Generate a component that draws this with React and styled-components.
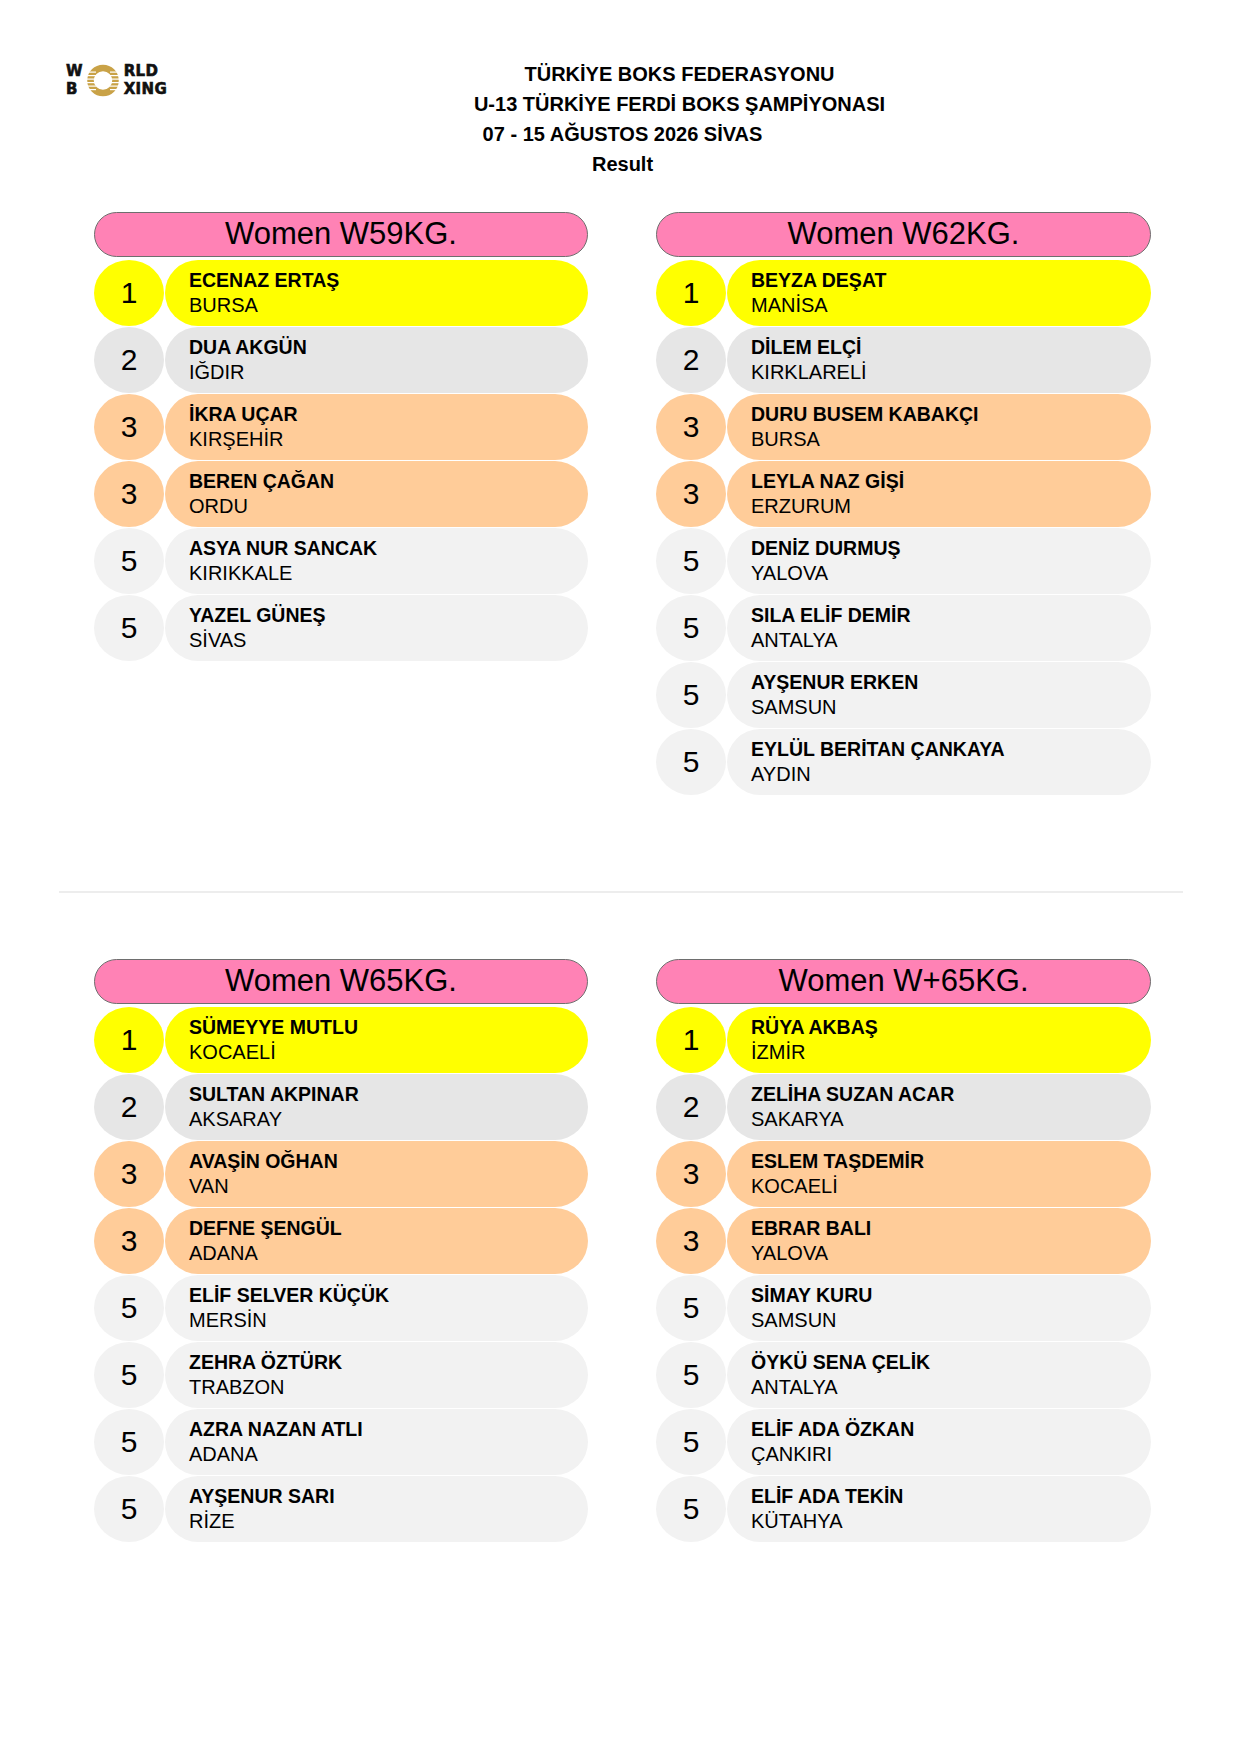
import styled, { createGlobalStyle } from "styled-components"

const GlobalStyle = createGlobalStyle`
    html, body {
        margin: 0;
        padding: 0;
        background: #ffffff;
    }
    body {
        font-family: "Liberation Sans", Arial, sans-serif;
        color: #000;
    }
`

const placeColors = {
    1: "#ffff00",
    2: "#e6e6e6",
    3: "#ffcc99",
    5: "#f2f2f2",
}

const categories = [
    [
        {
            title: "Women W59KG.",
            rows: [
                [1, "ECENAZ ERTAŞ", "BURSA"],
                [2, "DUA AKGÜN", "IĞDIR"],
                [3, "İKRA UÇAR", "KIRŞEHİR"],
                [3, "BEREN ÇAĞAN", "ORDU"],
                [5, "ASYA NUR SANCAK", "KIRIKKALE"],
                [5, "YAZEL GÜNEŞ", "SİVAS"],
            ],
        },
        {
            title: "Women W62KG.",
            rows: [
                [1, "BEYZA DEŞAT", "MANİSA"],
                [2, "DİLEM ELÇİ", "KIRKLARELİ"],
                [3, "DURU BUSEM KABAKÇI", "BURSA"],
                [3, "LEYLA NAZ GİŞİ", "ERZURUM"],
                [5, "DENİZ DURMUŞ", "YALOVA"],
                [5, "SILA ELİF DEMİR", "ANTALYA"],
                [5, "AYŞENUR ERKEN", "SAMSUN"],
                [5, "EYLÜL BERİTAN ÇANKAYA", "AYDIN"],
            ],
        },
    ],
    [
        {
            title: "Women W65KG.",
            rows: [
                [1, "SÜMEYYE MUTLU", "KOCAELİ"],
                [2, "SULTAN AKPINAR", "AKSARAY"],
                [3, "AVAŞİN OĞHAN", "VAN"],
                [3, "DEFNE ŞENGÜL", "ADANA"],
                [5, "ELİF SELVER KÜÇÜK", "MERSİN"],
                [5, "ZEHRA ÖZTÜRK", "TRABZON"],
                [5, "AZRA NAZAN ATLI", "ADANA"],
                [5, "AYŞENUR SARI", "RİZE"],
            ],
        },
        {
            title: "Women W+65KG.",
            rows: [
                [1, "RÜYA AKBAŞ", "İZMİR"],
                [2, "ZELİHA SUZAN ACAR", "SAKARYA"],
                [3, "ESLEM TAŞDEMİR", "KOCAELİ"],
                [3, "EBRAR BALI", "YALOVA"],
                [5, "SİMAY KURU", "SAMSUN"],
                [5, "ÖYKÜ SENA ÇELİK", "ANTALYA"],
                [5, "ELİF ADA ÖZKAN", "ÇANKIRI"],
                [5, "ELİF ADA TEKİN", "KÜTAHYA"],
            ],
        },
    ],
]

const Page = styled.div`
    width: 1241px;
    min-height: 1755px;
    box-sizing: border-box;
    padding-top: 59px;
`

const Header = styled.header`
    display: grid;
    grid-template-columns: 170px 1fr 170px;
    align-items: start;
`

const Logo = styled.div`
    display: grid;
    grid-template-columns: auto 32px auto;
    grid-template-rows: 18px 18px;
    column-gap: 1.5px;
    margin: 3px 0 0 66px;
    font-family: "DejaVu Sans", sans-serif;
    font-weight: 700;
    font-size: 15px;
    line-height: 18px;
    color: #111;
    -webkit-text-stroke: 0.6px #111;
`

const LogoWord = styled.span`
    margin-left: ${({ right }) => (right ? "3px" : "0")};
    letter-spacing: 0.4px;
`

const Ring = styled.svg`
    grid-row: 1 / span 2;
    grid-column: 2;
    align-self: center;
`

const Title = styled.div`
    display: flex;
    flex-direction: column;
    font-weight: 700;
    font-size: 20px;
    line-height: 30px;
    text-align: center;
`

const TitleLine = styled.div`
    padding-left: ${({ shift }) => shift * 2}px;
`

const Section = styled.section`
    display: grid;
    grid-template-columns: 494px 495px;
    column-gap: 68px;
    align-items: start;
    padding-left: 94px;
    margin-top: ${({ top }) => top}px;
`

const Card = styled.div`
    display: flex;
    flex-direction: column;
    gap: 1px;
`

const CardTitle = styled.div`
    height: 45px;
    box-sizing: border-box;
    margin-bottom: 2px;
    border: 1.5px solid #6e6e6e;
    border-radius: 23px;
    background: #ff82b5;
    font-size: 31px;
    line-height: 42px;
    text-align: center;
`

const Row = styled.div`
    display: flex;
    height: 66px;
    gap: 1px;
`

const Place = styled.div`
    width: 70px;
    flex: none;
    border-radius: 50%;
    background: ${({ place }) => placeColors[place]};
    display: flex;
    align-items: center;
    justify-content: center;
    font-size: 30px;
`

const Info = styled.div`
    flex: 1;
    border-radius: 33px;
    background: ${({ place }) => placeColors[place]};
    display: flex;
    flex-direction: column;
    justify-content: center;
    padding-left: 24px;
    line-height: 25px;
`

const Name = styled.div`
    font-weight: 700;
    font-size: 19.5px;
`

const City = styled.div`
    font-size: 20px;
`

const Divider = styled.hr`
    border: 0;
    height: 2px;
    background: #ededed;
    margin: 96px 58px 0 59px;
`

const RingIcon = () => {
    const stripes = [-9, -5.5, -2, 1.5, 5, 8.5]
    return (
        <Ring width="32" height="33" viewBox="0 0 32 33">
            <circle
                cx="16"
                cy="16.5"
                r="12.5"
                fill="none"
                stroke="#c9a247"
                strokeWidth="6.5"
            />
            {stripes.map((y) => (
                <g key={y}>
                    <rect x="0" y={16.5 + y} width="9" height="1.2" fill="#fff" />
                    <rect x="23" y={16.5 + y} width="9" height="1.2" fill="#fff" />
                </g>
            ))}
        </Ring>
    )
}

const CategoryCard = ({ title, rows }) => (
    <Card>
        <CardTitle>{title}</CardTitle>
        {rows.map(([place, name, city], i) => (
            <Row key={i}>
                <Place place={place}>{place}</Place>
                <Info place={place}>
                    <Name>{name}</Name>
                    <City>{city}</City>
                </Info>
            </Row>
        ))}
    </Card>
)

const App = () => {
    return (
        <>
            <GlobalStyle />
            <Page>
                <Header>
                    <Logo>
                        <LogoWord>W</LogoWord>
                        <RingIcon />
                        <LogoWord right>RLD</LogoWord>
                        <LogoWord>B</LogoWord>
                        <LogoWord right>XING</LogoWord>
                    </Logo>
                    <Title>
                        <TitleLine shift={59}>TÜRKİYE BOKS FEDERASYONU</TitleLine>
                        <TitleLine shift={59}>
                            U-13 TÜRKİYE FERDİ BOKS ŞAMPİYONASI
                        </TitleLine>
                        <TitleLine shift={2}>07 - 15 AĞUSTOS 2026 SİVAS</TitleLine>
                        <TitleLine shift={2}>Result</TitleLine>
                    </Title>
                    <div />
                </Header>
                <Section top={33}>
                    {categories[0].map((c) => (
                        <CategoryCard key={c.title} {...c} />
                    ))}
                </Section>
                <Divider />
                <Section top={66}>
                    {categories[1].map((c) => (
                        <CategoryCard key={c.title} {...c} />
                    ))}
                </Section>
            </Page>
        </>
    )
}

export default App
